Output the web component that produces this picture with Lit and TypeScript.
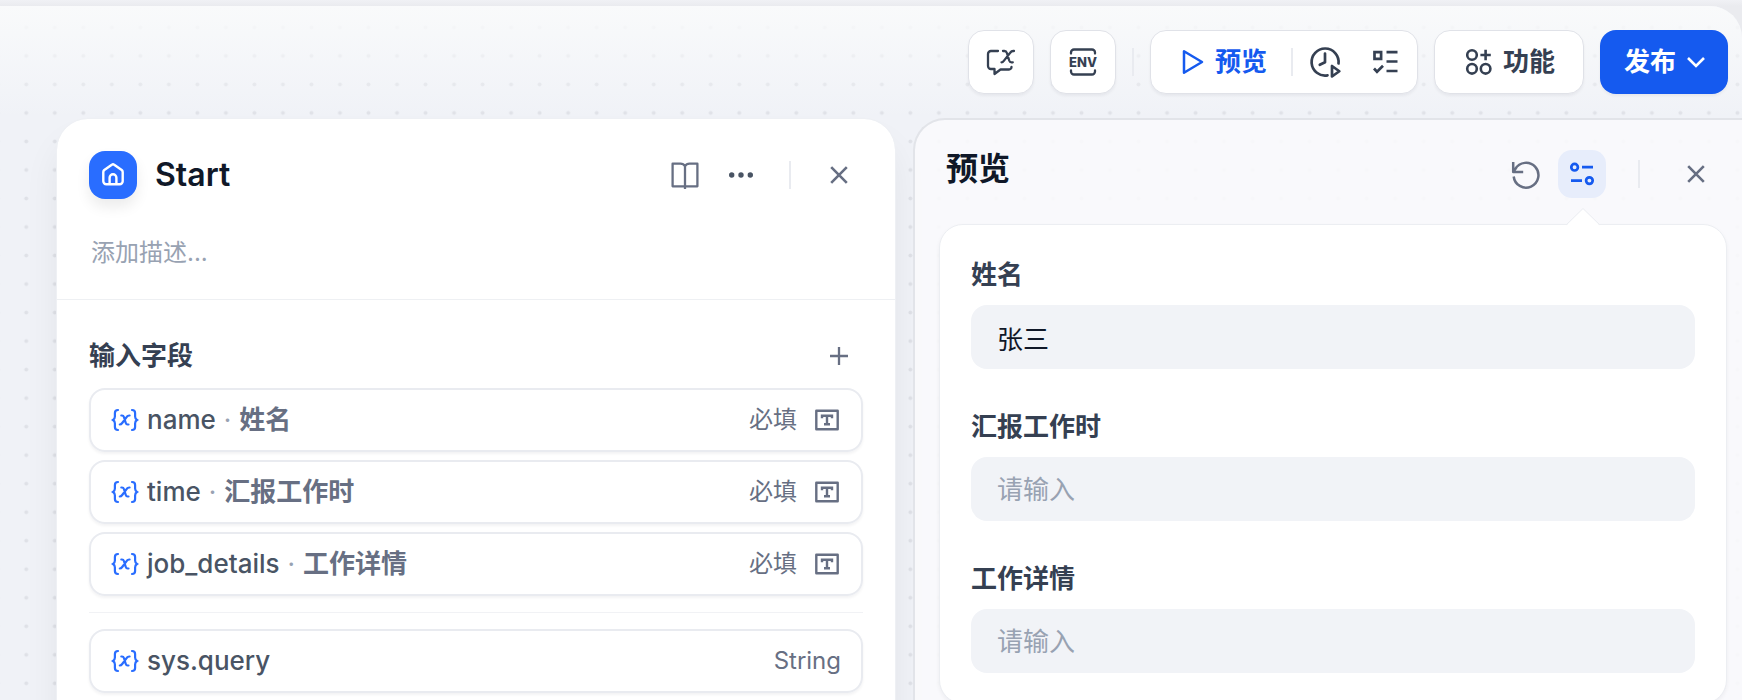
import { LitElement, html, css, svg } from "lit";
import { customElement, property } from "lit/decorators.js";

const icons = {
  chatVar: svg`<svg viewBox="0 0 32 32" width="32" height="32" fill="none" stroke="currentColor" stroke-width="2.300" stroke-linecap="round" stroke-linejoin="round">
    <path d="M13 5H6a3 3 0 0 0-3 3v12a3 3 0 0 0 3 3h3.500v5l6-4.500h8.500a2.500 2.500 0 0 0 2.500-2.500"/>
    <path d="M18 5h1.500c1.200 0 2 .8 2.400 2l2.300 7.500c.4 1.200 1 1.800 2.200 1.800h1.400M29 5h-.8c-1.300 0-2.200.6-3 1.700l-6.400 8.200c-.7 1-1.300 1.400-2.300 1.400"/>
  </svg>`,
  env: svg`<svg viewBox="0 0 32 32" width="32" height="32" fill="none" stroke="currentColor" stroke-width="2.300" stroke-linecap="round">
    <path d="M4 7.500V6.500a3 3 0 0 1 3-3h18a3 3 0 0 1 3 3v1M4 24.500v1a3 3 0 0 0 3 3h18a3 3 0 0 0 3-3v-1"/>
    <text x="16" y="20.800" text-anchor="middle" fill="currentColor" stroke="none" font-family="Inter, sans-serif" font-weight="800" font-size="13">ENV</text>
  </svg>`,
  play: svg`<svg viewBox="0 0 28 28" width="28" height="28" fill="none" stroke="currentColor" stroke-width="2.500" stroke-linejoin="round"><path d="M5 3.300v21.400L23 14z"/></svg>`,
  clock: svg`<svg viewBox="0 0 32 32" width="32" height="32" fill="none" stroke="currentColor" stroke-width="2.700" stroke-linecap="round" stroke-linejoin="round">
    <path d="M29.500 17.500A13.500 13.500 0 1 0 18.500 29.300M16 7.500v8.700l-5.200 2.600"/><path d="M23 20v10.500l7.300-5.250z"/></svg>`,
  list: svg`<svg viewBox="0 0 28 28" width="28" height="28" fill="none" stroke="currentColor" stroke-width="2.700">
    <path d="M3.500 4.200h6.600v6.600H3.500zM15.500 4.200h11M15.500 13.500h11M15.500 23h11M3 20.500l3 3.200 6-6"/></svg>`,
  feature: svg`<svg viewBox="0 0 28 28" width="28" height="28" fill="none" stroke="currentColor" stroke-width="2.600">
    <circle cx="7" cy="7" r="4.800"/><circle cx="7" cy="20.800" r="4.800"/><circle cx="20.600" cy="20.800" r="4.800"/><path d="M20.600 1.800v10.400M15.400 7h10.400"/></svg>`,
  chevron: svg`<svg viewBox="0 0 24 24" width="24" height="24" fill="none" stroke="currentColor" stroke-width="2.600"><path d="M4 8l8 8 8-8"/></svg>`,
  home: svg`<svg viewBox="0 0 28 28" width="28" height="28" fill="none" stroke="currentColor" stroke-width="2.400" stroke-linejoin="round">
    <path d="M4.300 11v9.200a3 3 0 0 0 3 3h13.400a3 3 0 0 0 3-3V11c0-.8-.4-1.500-1-2l-7.500-5.300a2 2 0 0 0-2.400 0L5.300 9c-.6.500-1 1.200-1 2z"/>
    <path d="M10.600 23v-6.300a3.400 3.400 0 0 1 6.800 0V23"/></svg>`,
  book: svg`<svg viewBox="0 0 32 32" width="32" height="32" fill="none" stroke="currentColor" stroke-width="2.300" stroke-linejoin="round">
    <path d="M16 7.200C15 5.500 13.400 4.700 11.500 4.700H3.600v22.600h24.800V4.700h-7.900c-1.900 0-3.500.8-4.500 2.500zM16 7v23"/></svg>`,
  more: svg`<svg viewBox="0 0 32 32" width="32" height="32" fill="currentColor"><circle cx="6.700" cy="16" r="2.700"/><circle cx="16" cy="16" r="2.700"/><circle cx="25.300" cy="16" r="2.700"/></svg>`,
  close: svg`<svg viewBox="0 0 28 28" width="28" height="28" fill="none" stroke="currentColor" stroke-width="2.600"><path d="M6.200 6.200l15.600 15.600M21.800 6.200L6.200 21.800"/></svg>`,
  plus: svg`<svg viewBox="0 0 28 28" width="28" height="28" fill="none" stroke="currentColor" stroke-width="2.300"><path d="M14 5v18M5 14h18"/></svg>`,
  retry: svg`<svg viewBox="0 0 32 32" width="32" height="32" fill="none" stroke="currentColor" stroke-width="2.500">
    <path d="M3.700 18.500A12.400 12.400 0 1 0 5.300 11L3.200 14M3.200 4v10h10" stroke-linejoin="round"/></svg>`,
  sliders: svg`<svg viewBox="0 0 28 28" width="28" height="28" fill="none" stroke="currentColor" stroke-width="2.700">
    <circle cx="6.600" cy="7.200" r="3.300"/><path d="M14 7.200h11M3 20.600h11"/><circle cx="21.400" cy="20.600" r="3.300"/></svg>`,
  variable: svg`<svg viewBox="0 0 28 28" width="28" height="28" fill="none" stroke="currentColor" stroke-width="2.200" stroke-linecap="round">
    <path d="M7 4C4.600 4 3.900 5 3.900 7v3.600c0 1.700-.6 2.600-1.900 3.400 1.300.8 1.900 1.700 1.900 3.400V21c0 2 .7 3 3.100 3M21 4c2.400 0 3.100 1 3.100 3v3.600c0 1.700.6 2.600 1.900 3.400-1.300.8-1.900 1.700-1.900 3.400V21c0 2-.7 3-3.100 3"/>
    <path d="M10.300 9.500h.7c1 0 1.600.5 1.900 1.500l1.900 6c.3 1 .9 1.500 1.800 1.500h.9M18.600 9.500h-.4c-1 0-1.700.4-2.400 1.300l-4.600 6.200c-.7 1-1.300 1.500-2.400 1.500"/></svg>`,
  textBox: svg`<svg viewBox="0 0 28 28" width="28" height="28" fill="none" stroke="currentColor" stroke-width="2.400">
    <path d="M3.300 4.700h21.400v18.600H3.300z" stroke-linejoin="round"/><path d="M9 12.200V9.800h10v2.400M14 9.800v8.700M11 18.300h6"/></svg>`,
};

const base = css`
  *, *::before { box-sizing: border-box; }
  button { margin: 0; padding: 0; border: 0; background: none; color: inherit; font: inherit; cursor: pointer; }
  svg { display: block; flex: none; }
  h2, h3, p, ul { margin: 0; padding: 0; font-size: inherit; font-weight: inherit; }
  .icon-btn { display: flex; align-items: center; justify-content: center; width: 48px; height: 48px; border-radius: 14px; color: #676f83; }
  .rule { flex: none; width: 2px; height: 28px; background: #e9ebf0; }
`;

@customElement("top-bar")
class TopBar extends LitElement {
  static styles = [base, css`
    :host { display: flex; justify-content: flex-end; align-items: center; gap: 16px; padding: 24px 14px; color: #354052; font-size: 26px; line-height: 36px; font-weight: 600;
      background: linear-gradient(#f9fafb, rgba(249, 250, 251, 0)); }
    .box { display: flex; align-items: center; height: 64px; border: 1px solid #e0e2e8; border-radius: 16px; background: #fff; box-shadow: 0 2px 3px rgba(16, 24, 40, 0.05); }
    .square { width: 66px; justify-content: center; }
    .run { display: flex; align-items: center; gap: 8px; height: 100%; padding: 0 24px 0 28px; color: #155aef; }
    .tools { display: flex; gap: 12px; padding: 0 8px; }
    .tools .icon-btn { color: #354052; }
    .feature { gap: 10px; padding: 0 28px 0 30px; }
    .publish { gap: 8px; padding: 0 20px 0 24px; border: 0; background: #155aef; color: #fff; }
  `];

  render() {
    return html`
      <button class="box square" aria-label="会话变量">${icons.chatVar}</button>
      <button class="box square" aria-label="环境变量">${icons.env}</button>
      <span class="rule"></span>
      <div class="box">
        <button class="run">${icons.play}<span>预览</span></button>
        <span class="rule"></span>
        <div class="tools">
          <button class="icon-btn" aria-label="运行历史">${icons.clock}</button>
          <button class="icon-btn" aria-label="检查清单">${icons.list}</button>
        </div>
      </div>
      <button class="box feature">${icons.feature}<span>功能</span></button>
      <button class="box publish"><span>发布</span>${icons.chevron}</button>
    `;
  }
}

interface Field { name: string; label?: string; type?: string; }

const inputFields: Field[] = [
  { name: "name", label: "姓名" },
  { name: "time", label: "汇报工作时" },
  { name: "job_details", label: "工作详情" },
];
const systemFields: Field[] = [{ name: "sys.query", type: "String" }];

@customElement("node-panel")
class NodePanel extends LitElement {
  static styles = [base, css`
    :host { display: block; box-sizing: border-box; border: 1px solid #eef0f4; border-bottom: 0; border-radius: 32px 32px 0 0; background: #fff; background-clip: padding-box;
      box-shadow: 0 24px 36px rgba(9, 9, 11, 0.06); }
    .head { display: flex; align-items: center; padding: 32px 32px 0; }
    .badge { display: flex; align-items: center; justify-content: center; width: 48px; height: 48px; border-radius: 16px; background: #296dff; color: #fff; box-shadow: 0 8px 14px rgba(9, 9, 11, 0.08); }
    .title { flex: 1; margin-left: 18px; font-size: 32px; line-height: 40px; font-weight: 600; color: #101828; }
    .actions { display: flex; align-items: center; gap: 8px; }
    .more { color: #495464; }
    .head > .rule { margin: 0 24px; }
    .desc { padding: 36px 34px 28px; border-bottom: 1px solid #eef0f3; font-size: 24px; line-height: 36px; color: #98a2b2; }
    .body { padding: 32px; }
    .section { display: flex; align-items: center; justify-content: space-between; margin-bottom: 8px; font-size: 26px; line-height: 36px; font-weight: 600; color: #354052; }
    .list { display: grid; gap: 8px; list-style: none; }
    .list + .list { margin-top: 16px; padding-top: 16px; border-top: 1px solid #f1f2f5; }
    .row { display: flex; align-items: center; height: 64px; padding: 0 20px; border: 2px solid #e9ebf0; border-radius: 16px; box-shadow: 0 2px 3px rgba(16, 24, 40, 0.05); font-size: 26px; line-height: 36px; font-weight: 500; color: #495464; }
    .row svg { color: #296dff; }
    .name { margin-left: 8px; }
    .dot { margin: 0 8px; font-weight: 400; color: #98a2b2; }
    .label { flex: 1; font-weight: 600; color: #676f83; }
    .meta { display: flex; align-items: center; gap: 16px; margin-left: auto; font-size: 24px; font-weight: 400; color: #676f83; }
    .row .meta svg { color: #676f83; }
  `];

  private row(f: Field) {
    return html`<li class="row">
      ${icons.variable}<span class="name">${f.name}</span>
      ${f.label ? html`<span class="dot">·</span><span class="label">${f.label}</span>` : ""}
      <span class="meta">${f.type ?? html`<span>必填</span>${icons.textBox}`}</span>
    </li>`;
  }

  render() {
    return html`
      <div class="head">
        <span class="badge">${icons.home}</span>
        <h2 class="title">Start</h2>
        <div class="actions">
          <button class="icon-btn" aria-label="帮助文档">${icons.book}</button>
          <button class="icon-btn more" aria-label="更多">${icons.more}</button>
        </div>
        <span class="rule"></span>
        <button class="icon-btn" aria-label="关闭">${icons.close}</button>
      </div>
      <p class="desc">添加描述...</p>
      <div class="body">
        <div class="section"><h3>输入字段</h3><button class="icon-btn" aria-label="添加">${icons.plus}</button></div>
        <ul class="list">${inputFields.map((f) => this.row(f))}</ul>
        <ul class="list">${systemFields.map((f) => this.row(f))}</ul>
      </div>
    `;
  }
}

@customElement("text-field")
class TextField extends LitElement {
  @property() label = "";
  @property() value = "";
  static styles = [base, css`
    :host { display: grid; gap: 12px; }
    label { font-size: 26px; line-height: 36px; font-weight: 600; color: #354052; }
    input { width: 100%; height: 64px; padding: 0 26px; border: 0; border-radius: 16px; background: #f1f3f7; font: inherit; font-size: 26px; color: #101828; outline: none; }
    input::placeholder { color: #98a2b2; opacity: 1; }
  `];
  render() {
    return html`<label for="field">${this.label}</label><input id="field" type="text" placeholder="请输入" .value=${this.value} />`;
  }
}

@customElement("preview-panel")
class PreviewPanel extends LitElement {
  static styles = [base, css`
    :host { display: block; box-sizing: border-box; padding: 30px 15px 0 24px; border: 2px solid #e2e4e9; border-width: 2px 0 0 2px; border-radius: 32px 0 0 0; background: rgba(249, 250, 252, 0.9); background-clip: padding-box; }
    .head { display: flex; align-items: center; padding: 0 7px; }
    .title { flex: 1; align-self: flex-start; font-size: 32px; line-height: 38px; font-weight: 600; color: #101828; }
    .actions { display: flex; gap: 8px; }
    .active { background: #e7edfb; color: #155aef; }
    .head > .rule { margin: 0 32px; }
    .card { position: relative; display: grid; gap: 40px; margin-top: 26px; padding: 32px 31px 30px; border: 1px solid #eceef2; border-radius: 24px; background: #fff; box-shadow: 0 2px 4px rgba(16, 24, 40, 0.05); }
    .arrow { position: absolute; right: 126px; bottom: 100%; }
  `];
  render() {
    return html`
      <div class="head">
        <h2 class="title">预览</h2>
        <div class="actions">
          <button class="icon-btn" aria-label="重新开始">${icons.retry}</button>
          <button class="icon-btn active" aria-label="用户输入">${icons.sliders}</button>
        </div>
        <span class="rule"></span>
        <button class="icon-btn" aria-label="关闭">${icons.close}</button>
      </div>
      <form class="card" @submit=${(e: Event) => e.preventDefault()}>
        <svg class="arrow" viewBox="0 0 34 17" width="34" height="17" overflow="visible"><path d="M0 18L17 1l17 17z" fill="#fff"/><path d="M0 17L17 0.500l17 16.500" fill="none" stroke="#eceef2"/></svg>
        <text-field label="姓名" value="张三"></text-field>
        <text-field label="汇报工作时"></text-field>
        <text-field label="工作详情"></text-field>
      </form>
    `;
  }
}

@customElement("app-root")
class AppRoot extends LitElement {
  static styles = [base, css`
    :host { display: flex; flex-direction: column; box-sizing: border-box; height: 100vh; padding-top: 6px; overflow: hidden; background: linear-gradient(#f0f1f5, #eaebef 6px);
      font-family: Inter, "Noto Sans CJK SC", sans-serif; }
    .canvas { position: relative; isolation: isolate; flex: 1; min-height: 0; display: flex; flex-direction: column; overflow: hidden; border-radius: 0 32px 0 0; background: #f0f2f7; }
    .dots { position: absolute; inset: 0; z-index: -1; width: 100%; height: 100%; }
    .panels { flex: 1; min-height: 0; display: grid; grid-template-columns: minmax(0, 840fr) minmax(0, 829fr); gap: 17px; padding-left: 56px; }
  `];
  render() {
    return html`
      <main class="canvas">
        <svg class="dots" aria-hidden="true">
          <defs><pattern id="grid" x="12" y="7.100" width="28.520" height="28.520" patternUnits="userSpaceOnUse"><circle cx="14.260" cy="14.260" r="2" fill="#dfe1e7"/></pattern></defs>
          <rect width="100%" height="100%" fill="url(#grid)"/>
        </svg>
        <top-bar></top-bar>
        <div class="panels">
          <node-panel></node-panel>
          <preview-panel></preview-panel>
        </div>
      </main>
    `;
  }
}
